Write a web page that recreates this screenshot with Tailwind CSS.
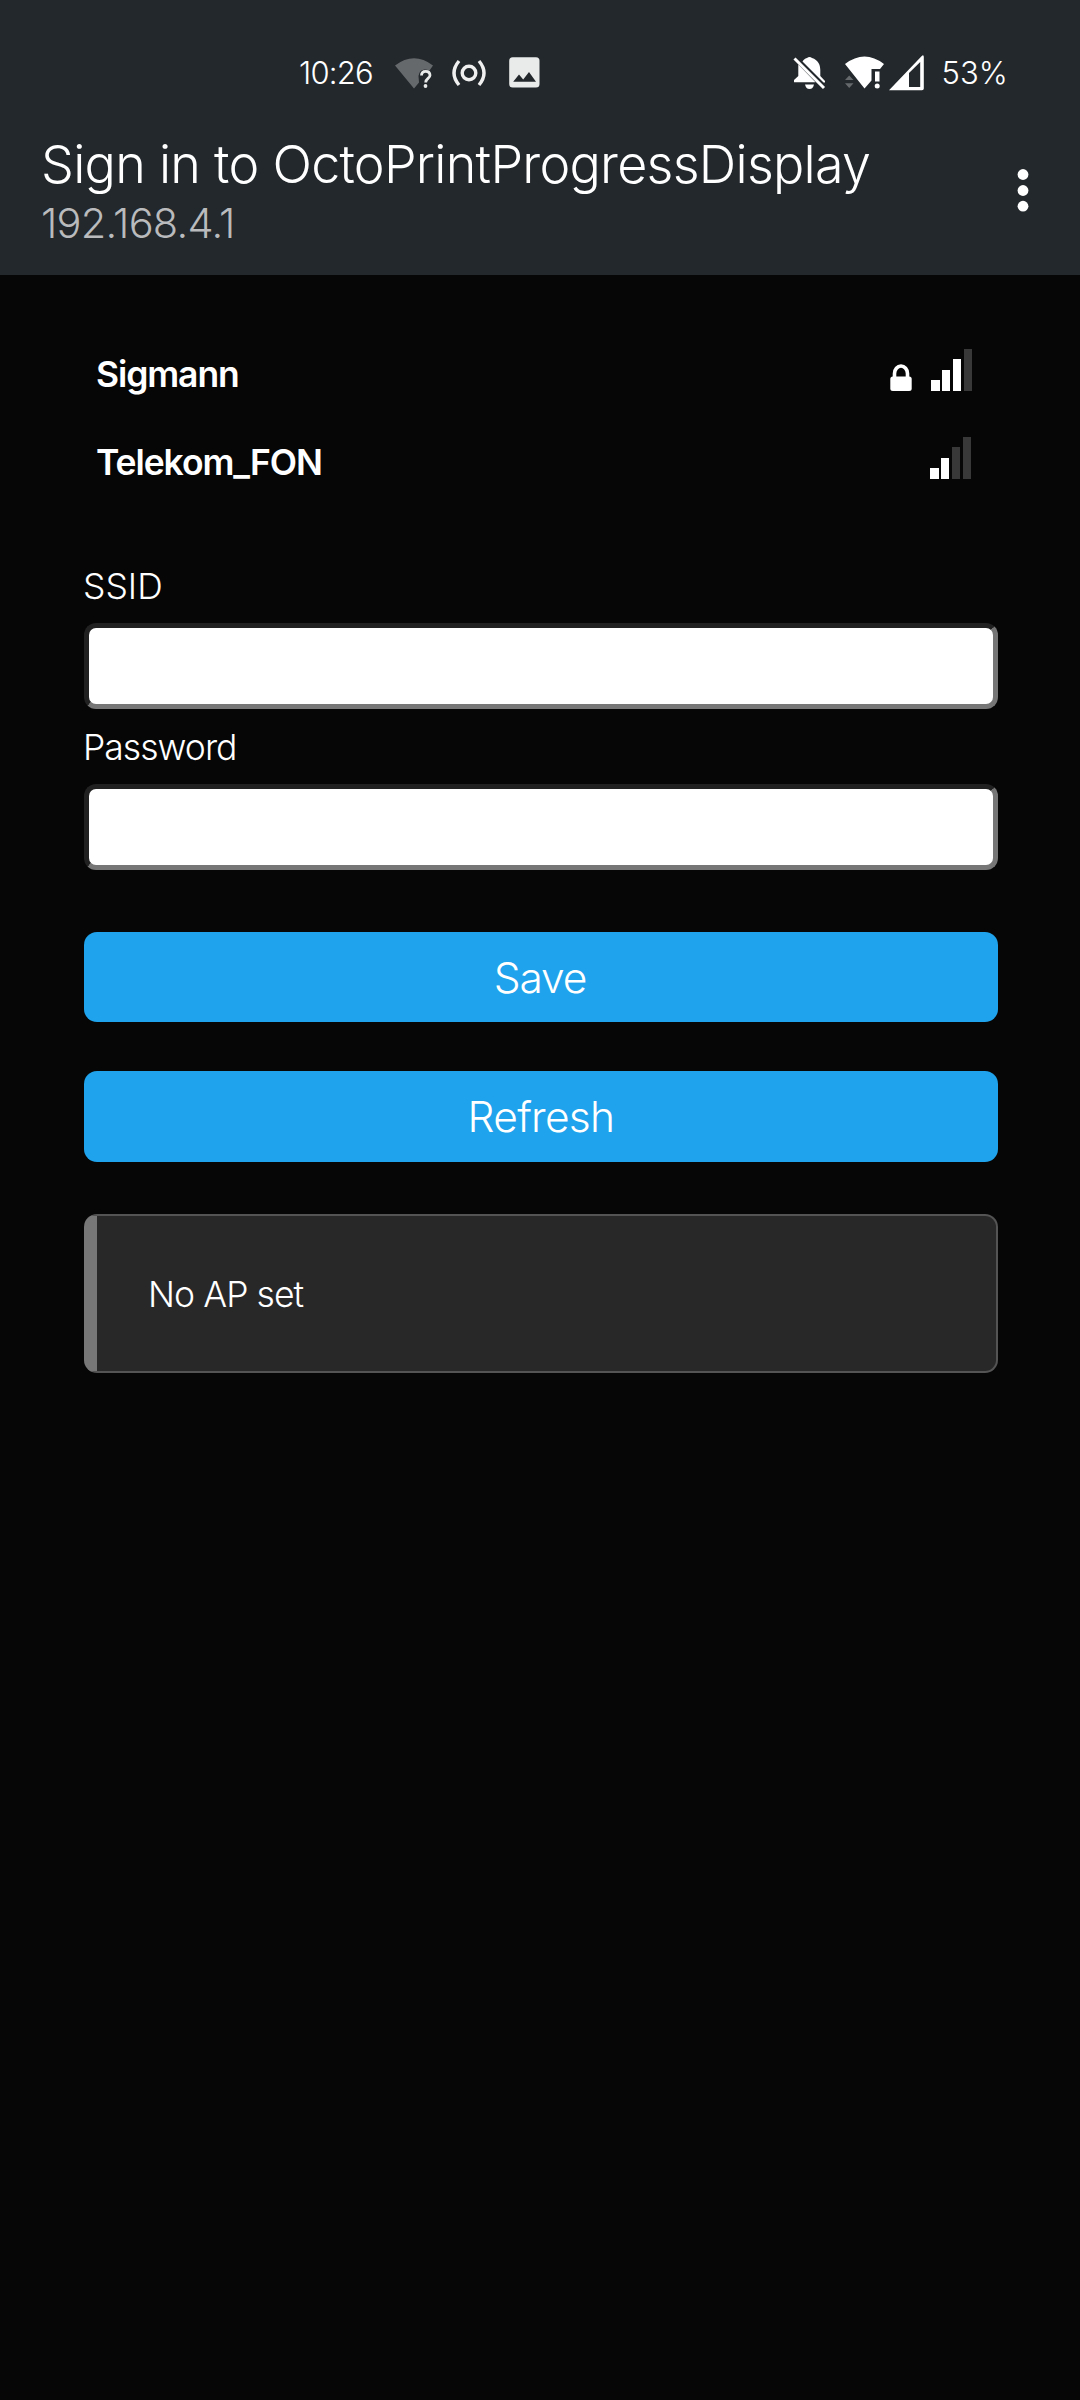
<!DOCTYPE html>
<html lang="en">
<head>
<meta charset="utf-8">
<title>Sign in to OctoPrintProgressDisplay</title>
<script src="https://cdn.jsdelivr.net/npm/@tailwindcss/browser@4"></script>
</head>
<body class="min-h-[2400px] bg-[#060606] font-[Inter,sans-serif] font-light text-white">
<header class="h-[275px] bg-[#23282c]">
  <!-- Status bar -->
  <div class="flex h-[134px] items-center pt-[11px] pl-[299px] pr-[72px]">
    <span class="w-[96px] text-[31px] leading-none tracking-[-0.78px] whitespace-nowrap">10:26</span>
    <svg class="h-[32px] w-[40px]" viewBox="395 56 40 32">
      <path d="M395 64.5Q414 50 433 64.5L429.5 69.5Q420 66 418.5 75L419 81.500L414 87.500Z" fill="#66696c"/>
      <path d="M421.500 74.500Q421.500 70.300 425.700 70.300T430 74.300C430 77.500 425.700 77.500 425.700 81.500" fill="none" stroke="#e9eaea" stroke-width="2.800"/>
      <circle cx="425.500" cy="85" r="1.900" fill="#e9eaea"/>
    </svg>
    <svg class="ml-[16px] h-[32px] w-[36px]" viewBox="451 56.500 36 32" fill="none" stroke="#f0f0f0" stroke-width="3.400">
      <circle cx="469" cy="72.500" r="6.800"/>
      <path d="M459 60.500Q449 72.500 459 84.500M479 60.500Q489 72.500 479 84.500"/>
    </svg>
    <svg class="ml-[22px] h-[31px] w-[31px]" viewBox="0 0 31 31">
      <rect x=".2" y=".2" width="30.300" height="30.300" rx="3.500" fill="#e9eaea"/>
      <path d="M4.200 24.700L10 17.500L14.200 22.500L20 15L27 24.700Z" fill="#23282c"/>
    </svg>
    <svg class="ml-auto h-[34px] w-[34px]" viewBox="793 56 34 34" fill="#fff">
      <path d="M802.500 61.500C804.500 58.500 806 58.500 807 58Q809.500 56 812 58C818 60 820.300 64.500 820.300 70V76L825 81V82.500H823.500Z"/>
      <path d="M798.300 64.500L815.500 82.300H794V80L798.300 76Z"/>
      <path d="M805 84.500H814Q813 89 809.500 89T805 84.500Z"/>
      <path d="M794.500 58.500L824 88" stroke="#fff" stroke-width="3"/>
    </svg>
    <svg class="ml-[17px] h-[36px] w-[41px]" viewBox="844 54.500 41 36">
      <path d="M845 63.500Q864.500 48.500 884 63.500L880 68.500H871.500V80L864.500 88Z" fill="#fff"/>
      <path d="M875 71H879.500V81H875Z" fill="#fff"/><circle cx="877.200" cy="85.500" r="2.500" fill="#fff"/>
      <path d="M845 79.500L849.200 75L853.500 79.500ZM845 82.800L849.200 87.500L853.500 82.800Z" fill="#66696c"/>
    </svg>
    <svg class="ml-[3px] h-[36px] w-[36px]" viewBox="888 54.500 36 36">
      <path fill-rule="evenodd" d="M889 89.800L922 55.200Q923.800 54 923.800 56.500V88Q923.800 89.800 922 89.800ZM909 72.500V86.500H920.200V61.500Z" fill="#fff"/>
    </svg>
    <span class="ml-[17px] text-[31px] leading-none tracking-[0.1px] whitespace-nowrap">53%</span>
  </div>
  <!-- App bar -->
  <div class="flex justify-between pl-[41px] pr-[51px]">
    <div>
      <h1 class="text-[52px] leading-[62px] tracking-[-0.73px] whitespace-nowrap">Sign in to OctoPrintProgressDisplay</h1>
      <p class="text-[41.5px] leading-[54px] tracking-[-0.72px] text-[#b9bbbd]">192.168.4.1</p>
    </div>
    <svg class="mt-[34px] h-[44px] w-[12px]" viewBox="0 0 12 44" fill="#fff"><circle cx="6" cy="6.500" r="5.400"/><circle cx="6" cy="22.500" r="5.400"/><circle cx="6" cy="38.200" r="5.400"/></svg>
  </div>
</header>
<main class="pt-[55px] pl-[84px] pr-[82px]">
  <div class="flex h-[88px] justify-between pl-[12px] pr-[26px]">
    <span class="text-[35.5px] leading-[90px] font-semibold tracking-[-1.11px]">Sigmann</span>
    <div class="flex items-end pb-[27px]">
      <svg class="h-[27px] w-[22px]" viewBox="0 0 22 27"><path d="M4.500 13V9.500a6.500 7.500 0 0 1 13 0V13" fill="none" stroke="#fff" stroke-width="3.600"/><rect x=".3" y="12.500" width="21.400" height="14.500" rx="2.500" fill="#fff"/></svg>
      <div class="ml-[19px] flex items-end gap-[2.300px]">
        <i class="h-[11px] w-[8.500px] bg-white"></i><i class="h-[21px] w-[8.500px] bg-white"></i><i class="h-[32px] w-[8.500px] bg-white"></i><i class="h-[42px] w-[8.500px] bg-[#383838]"></i>
      </div>
    </div>
  </div>
  <div class="flex h-[88px] justify-between pl-[12px] pr-[27px]">
    <span class="text-[35.5px] leading-[90px] font-semibold tracking-[-1.09px]">Telekom_FON</span>
    <div class="flex items-end gap-[2.300px] pb-[27px]">
      <i class="h-[11px] w-[8.500px] bg-white"></i><i class="h-[21px] w-[8.500px] bg-white"></i><i class="h-[32px] w-[8.500px] bg-[#383838]"></i><i class="h-[42px] w-[8.500px] bg-[#383838]"></i>
    </div>
  </div>
  <label for="s" class="mt-[43px] block h-[74px] -ml-px text-[35.5px] leading-[76px]">SSID</label>
  <input id="s" class="block h-[86px] w-full rounded-[12px] border-[5px] border-t-[#212121] border-r-[#767676] border-b-[#767676] border-l-[#212121] bg-white px-4 text-black">
  <label for="p" class="block h-[75px] -ml-px text-[35.5px] leading-[77px] tracking-[-0.98px]">Password</label>
  <input id="p" type="password" class="block h-[86px] w-full rounded-[12px] border-[5px] border-t-[#212121] border-r-[#767676] border-b-[#767676] border-l-[#212121] bg-white px-4 text-black">
  <button class="mt-[62px] flex h-[90px] w-full items-center justify-center rounded-[13px] bg-[#1fa3ec] pt-[3px] pr-[2px] text-[42.5px] leading-none tracking-[-1.11px]">Save</button>
  <button class="mt-[49px] flex h-[91px] w-full items-center justify-center rounded-[13px] bg-[#1fa3ec] pt-[2px] text-[42.5px] leading-none tracking-[-0.72px]">Refresh</button>
  <div class="mt-[52px] h-[159px] rounded-[13px] border-2 border-l-[13px] border-[#545454] border-l-[#777] bg-[#282828] pl-[51px] text-[35.5px] leading-[157px] tracking-[-0.94px]">No AP set</div>
</main>
</body>
</html>
